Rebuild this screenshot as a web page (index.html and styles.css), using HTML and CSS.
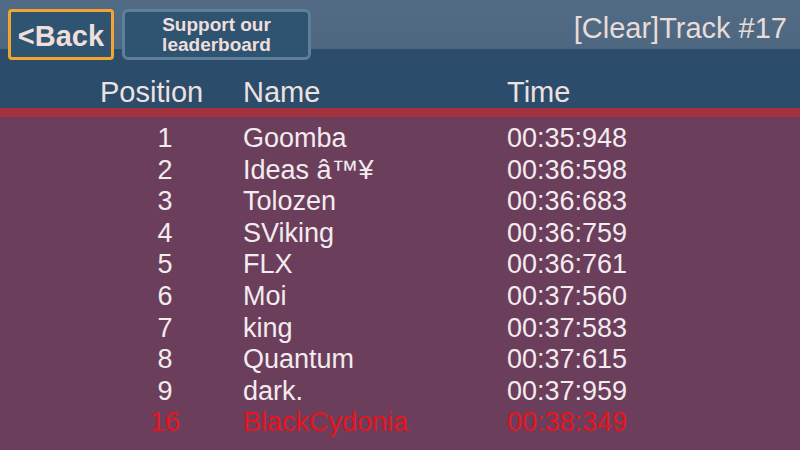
FILE: index.html
```html
<!DOCTYPE html>
<html>
<head>
<meta charset="utf-8">
<link rel="stylesheet" href="styles.css">
</head>
<body>
<div class="screen">
  <header class="header">
    <div class="toprow">
      <button class="btn btn-back">&lt;Back</button>
      <button class="btn btn-support">Support our<br>leaderboard</button>
      <div class="title">[Clear]Track #17</div>
    </div>
    <div class="cols">
      <div class="hpos">Position</div>
      <div class="hname">Name</div>
      <div class="htime">Time</div>
    </div>
  </header>
  <div class="redline"></div>
  <main class="list">
    <div class="row"><div class="pos">1</div><div class="name">Goomba</div><div class="time">00:35:948</div></div>
    <div class="row"><div class="pos">2</div><div class="name">Ideas â™¥</div><div class="time">00:36:598</div></div>
    <div class="row"><div class="pos">3</div><div class="name">Tolozen</div><div class="time">00:36:683</div></div>
    <div class="row"><div class="pos">4</div><div class="name">SViking</div><div class="time">00:36:759</div></div>
    <div class="row"><div class="pos">5</div><div class="name">FLX</div><div class="time">00:36:761</div></div>
    <div class="row"><div class="pos">6</div><div class="name">Moi</div><div class="time">00:37:560</div></div>
    <div class="row"><div class="pos">7</div><div class="name">king</div><div class="time">00:37:583</div></div>
    <div class="row"><div class="pos">8</div><div class="name">Quantum</div><div class="time">00:37:615</div></div>
    <div class="row"><div class="pos">9</div><div class="name">dark.</div><div class="time">00:37:959</div></div>
    <div class="row me"><div class="pos">16</div><div class="name">BlackCydonia</div><div class="time">00:38:349</div></div>
  </main>
</div>
</body>
</html>
```
FILE: styles.css
```css
html, body {
  margin: 0;
  padding: 0;
}
body {
  width: 800px;
  height: 450px;
  overflow: hidden;
  background: #6b3f5c;
  font-family: "Liberation Sans", Arial, sans-serif;
  color: #f3ebee;
}
.screen {
  width: 800px;
  height: 450px;
  display: flex;
  flex-direction: column;
}
.header {
  height: 108px;
  background: linear-gradient(#526b85 0, #4e6882 49px, #2b4c6a 49px, #2b4c6a 108px);
  display: flex;
  flex-direction: column;
}
.toprow {
  display: flex;
  align-items: flex-start;
  padding: 9px 13px 0 8px;
  height: 51px;
  box-sizing: content-box;
  gap: 8px;
}
.btn {
  box-sizing: border-box;
  height: 51px;
  margin: 0;
  padding: 0;
  font-family: "Liberation Sans", Arial, sans-serif;
  font-weight: bold;
  color: #efdfdb;
  background: #2e5472;
  cursor: pointer;
}
.btn-back {
  width: 106px;
  border: 3px solid #f2a62c;
  border-radius: 4px;
  font-size: 29px;
  line-height: 30px;
  padding-top: 2px;
}
.btn-support {
  width: 189px;
  border: 3px solid #5e7f9a;
  border-radius: 6px;
  font-size: 19px;
  line-height: 20px;
  padding-top: 1px;
}
.title {
  margin-left: auto;
  margin-top: 3px;
  font-size: 29px;
  line-height: 33px;
  color: #e8dcd8;
}
.cols {
  display: grid;
  grid-template-columns: 143px 264px 1fr;
  padding: 16px 0 0 100px;
  font-size: 29px;
  line-height: 33px;
  color: #eee2e0;
}
.redline {
  height: 9px;
  background: #a3323f;
}
.list {
  padding-top: 6px;
  display: flex;
  flex-direction: column;
}
.row {
  display: grid;
  grid-template-columns: 130px 264px 1fr;
  column-gap: 0;
  padding-left: 100px;
  font-size: 27px;
  line-height: 31.6px;
  height: 31.6px;
}
.row .pos {
  text-align: center;
}
.row .name {
  padding-left: 13px;
}
.row .time {
  padding-left: 13px;
}
.row.me {
  color: #e8131c;
}
```
